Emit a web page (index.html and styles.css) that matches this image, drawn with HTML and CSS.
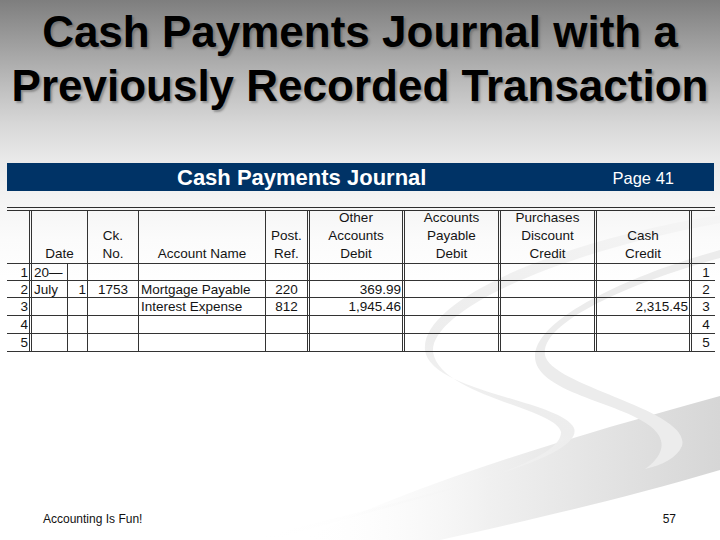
FILE: index.html
```html
<!DOCTYPE html>
<html lang="en">
<head>
<meta charset="utf-8">
<title>Cash Payments Journal with a Previously Recorded Transaction</title>
<link rel="stylesheet" href="styles.css">
</head>
<body>
<div class="slide">
  <svg class="swoosh" viewBox="0 0 720 540" width="720" height="540" aria-hidden="true">
    <defs>
      <linearGradient id="gBand" x1="0" y1="0" x2="1" y2="0">
        <stop offset="0" stop-color="#ffffff" stop-opacity="0"/>
        <stop offset="0.45" stop-color="#f0f0f0"/>
        <stop offset="1" stop-color="#d6d6d6"/>
      </linearGradient>
      <linearGradient id="gCurl" x1="0" y1="1" x2="1" y2="0">
        <stop offset="0" stop-color="#ffffff" stop-opacity="0"/>
        <stop offset="0.5" stop-color="#ededed"/>
        <stop offset="1" stop-color="#f5f5f5"/>
      </linearGradient>
    </defs>
    <path d="M 300 540 C 420 482, 560 440, 720 396 L 720 470 C 620 500, 520 522, 440 540 Z" fill="url(#gBand)"/>
    <path d="M 720 215 C 560 240, 420 300, 425 350 C 430 392, 560 400, 574 428 C 586 462, 400 500, 250 540 L 272 540 C 420 497, 562 466, 561 432 C 556 408, 440 396, 433 352 C 430 310, 560 252, 720 223 Z" fill="url(#gCurl)"/>
    <path d="M 720 258 C 640 280, 540 320, 545 355 C 550 386, 692 410, 682 446 C 677 458, 662 465, 645 469 C 664 455, 668 440, 650 426 C 620 402, 533 392, 535 355 C 538 315, 640 272, 720 250 Z" fill="#ececec"/>
  </svg>

  <h1 class="title"><span class="title-line">Cash Payments Journal with a</span><span class="title-line">Previously Recorded Transaction</span></h1>

  <section class="journal">
    <div class="bar">
      <span class="bar-title">Cash Payments Journal</span>
      <span class="bar-page">Page 41</span>
    </div>

    <div class="grid" role="table">
      <div class="c h dbl"></div>
      <div class="c h span2">Date</div>
      <div class="c h">Ck.<br>No.</div>
      <div class="c h">Account Name</div>
      <div class="c h dbl">Post.<br>Ref.</div>
      <div class="c h dbl">Other<br>Accounts<br>Debit</div>
      <div class="c h dbl">Accounts<br>Payable<br>Debit</div>
      <div class="c h dbl">Purchases<br>Discount<br>Credit</div>
      <div class="c h dbl">Cash<br>Credit</div>
      <div class="c h nr"></div>

      <div class="c num dbl">1</div>
      <div class="c l">20—</div>
      <div class="c r"></div>
      <div class="c m"></div>
      <div class="c l"></div>
      <div class="c m dbl"></div>
      <div class="c r dbl"></div>
      <div class="c r dbl"></div>
      <div class="c r dbl"></div>
      <div class="c r dbl"></div>
      <div class="c rn nr">1</div>

      <div class="c num dbl">2</div>
      <div class="c l">July</div>
      <div class="c r">1</div>
      <div class="c m">1753</div>
      <div class="c l">Mortgage Payable</div>
      <div class="c m dbl">220</div>
      <div class="c r dbl">369.99</div>
      <div class="c r dbl"></div>
      <div class="c r dbl"></div>
      <div class="c r dbl"></div>
      <div class="c rn nr">2</div>

      <div class="c num dbl">3</div>
      <div class="c l"></div>
      <div class="c r"></div>
      <div class="c m"></div>
      <div class="c l">Interest Expense</div>
      <div class="c m dbl">812</div>
      <div class="c r dbl">1,945.46</div>
      <div class="c r dbl"></div>
      <div class="c r dbl"></div>
      <div class="c r dbl">2,315.45</div>
      <div class="c rn nr">3</div>

      <div class="c num dbl">4</div>
      <div class="c l"></div>
      <div class="c r"></div>
      <div class="c m"></div>
      <div class="c l"></div>
      <div class="c m dbl"></div>
      <div class="c r dbl"></div>
      <div class="c r dbl"></div>
      <div class="c r dbl"></div>
      <div class="c r dbl"></div>
      <div class="c rn nr">4</div>

      <div class="c num dbl">5</div>
      <div class="c l"></div>
      <div class="c r"></div>
      <div class="c m"></div>
      <div class="c l"></div>
      <div class="c m dbl"></div>
      <div class="c r dbl"></div>
      <div class="c r dbl"></div>
      <div class="c r dbl"></div>
      <div class="c r dbl"></div>
      <div class="c rn nr">5</div>
    </div>
  </section>

  <footer class="footer">
    <span>Accounting Is Fun!</span>
    <span>57</span>
  </footer>
</div>
</body>
</html>
```

FILE: styles.css
```css
html, body {
  margin: 0;
  padding: 0;
}

body {
  width: 720px;
  height: 540px;
  overflow: hidden;
  font-family: "Liberation Sans", Arial, sans-serif;
  color: #111;
}

.slide {
  position: relative;
  width: 720px;
  height: 540px;
  overflow: hidden;
  display: flex;
  flex-direction: column;
  background: linear-gradient(to bottom,
    #7e7e7e 0px,
    #9c9c9c 40px,
    #bdbdbd 85px,
    #d8d8d8 125px,
    #e9e9e9 160px,
    #f4f4f4 200px,
    #fbfbfb 240px,
    #ffffff 290px);
}

.swoosh {
  position: absolute;
  left: 0;
  top: 0;
  z-index: 0;
}

.title {
  position: relative;
  z-index: 1;
  margin: 0;
  padding-top: 5px;
  font-size: 44px;
  line-height: 54px;
  font-weight: bold;
  text-align: center;
  color: #000;
  white-space: nowrap;
  text-shadow: 2px 2px 2px rgba(90, 90, 90, 0.5);
}

.title-line {
  display: block;
}

.journal {
  position: relative;
  z-index: 1;
  margin: 50px 0 0 7px;
  width: 708px;
}

.bar {
  display: flex;
  align-items: center;
  height: 28px;
  margin-right: 1px;
  background: #003366;
  color: #fff;
}

.bar-title {
  padding-left: 170px;
  padding-top: 2px;
  font-size: 22px;
  font-weight: bold;
}

.bar-page {
  margin-left: auto;
  margin-right: 40px;
  padding-top: 2px;
  font-size: 16.5px;
}

.grid {
  margin-top: 16px;
  display: grid;
  grid-template-columns: 25px 36px 20px 51px 127px 44px 95px 96px 96px 95px 23px;
  grid-template-rows: 53px 17px 17px 18px 18px 18px;
  border-top: 4px double #2e2e2e;
  font-size: 13.5px;
  color: #141414;
}

.c {
  box-sizing: border-box;
  border-right: 1px solid #333;
  border-bottom: 1px solid #333;
  display: flex;
  align-items: center;
  white-space: nowrap;
  overflow: hidden;
}

.dbl {
  border-right: 3px double #333;
}

.nr {
  border-right: none;
}

.h {
  flex-direction: column;
  justify-content: flex-end;
  align-items: center;
  text-align: center;
  line-height: 18px;
}

.span2 {
  grid-column: span 2;
}

.num {
  justify-content: flex-end;
  padding-right: 1px;
}

.rn {
  justify-content: center;
  padding-left: 5px;
}

.l {
  justify-content: flex-start;
  padding-left: 2px;
}

.c.l:nth-child(11n + 5) {
  padding-left: 3px;
}

.r {
  justify-content: flex-end;
  padding-right: 1px;
}

.m {
  justify-content: center;
}

.footer {
  position: relative;
  z-index: 1;
  margin-top: auto;
  display: flex;
  justify-content: space-between;
  padding: 0 44px 14px 43px;
  font-size: 12px;
  line-height: 14px;
  color: #111;
}
```
